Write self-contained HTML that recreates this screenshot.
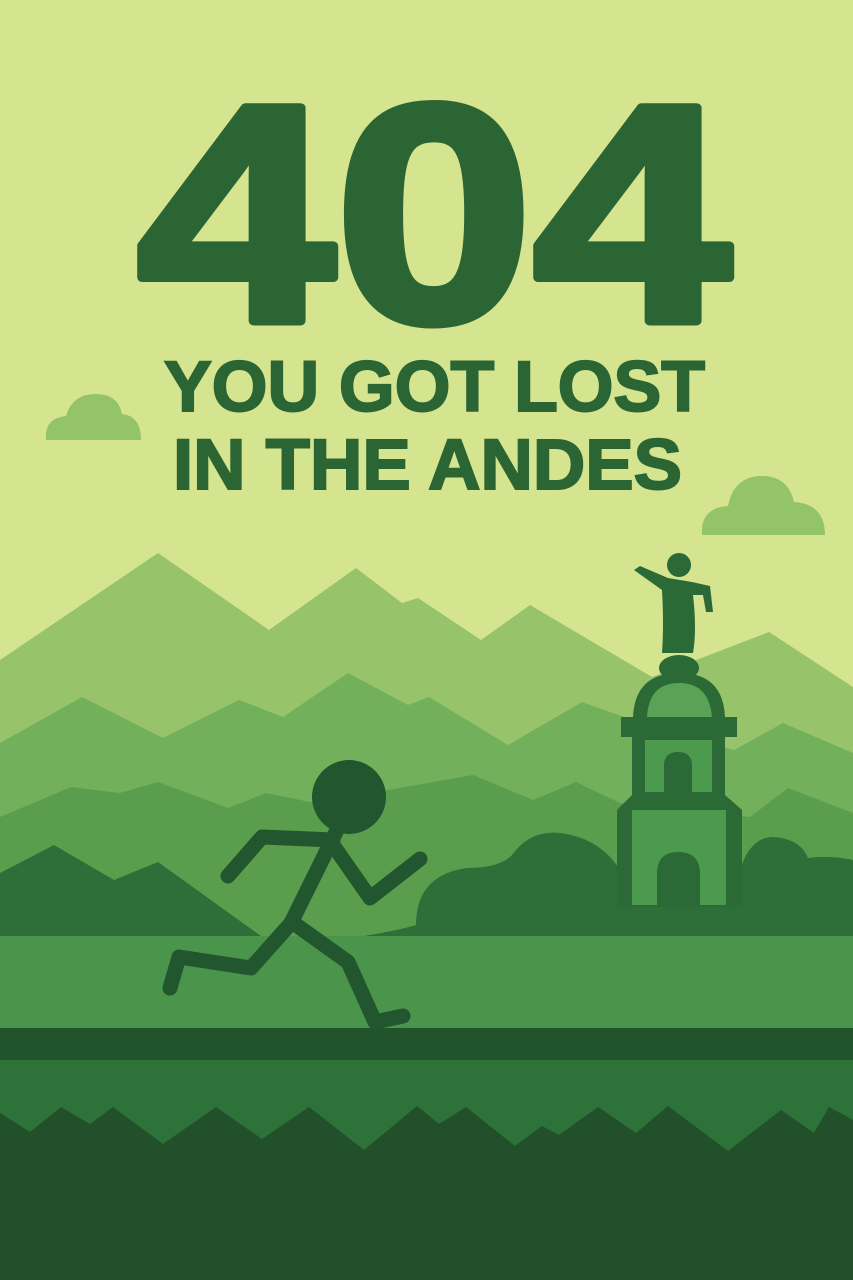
<!DOCTYPE html>
<html><head><meta charset="utf-8"><style>
html,body{margin:0;padding:0;width:853px;height:1280px;overflow:hidden;background:#d4e48f}
svg{display:block}
text{font-family:"Liberation Sans",sans-serif;font-weight:bold}
</style></head><body>
<svg width="853" height="1280" viewBox="0 0 853 1280" xmlns="http://www.w3.org/2000/svg">
<rect width="853" height="1280" fill="#d4e48f"/>
<path d="M46 440 Q44 418 66 416 Q72 394 96 394 Q118 394 122 414 Q141 416 141 440 Z" fill="#94c46a"/>
<path d="M702 535 Q700 508 728 506 Q734 476 762 476 Q788 476 794 502 Q825 504 825 535 Z" fill="#94c46a"/>
<text x="137" y="321" textLength="594" lengthAdjust="spacingAndGlyphs" font-size="310" fill="#2b6534" stroke="#2b6534" stroke-width="9" stroke-linejoin="round">404</text>
<text x="164" y="411" textLength="541" lengthAdjust="spacingAndGlyphs" font-size="71" fill="#2b6534" stroke="#2b6534" stroke-width="2">YOU GOT LOST</text>
<text x="173" y="489" textLength="509" lengthAdjust="spacingAndGlyphs" font-size="71" fill="#2b6534" stroke="#2b6534" stroke-width="2">IN THE ANDES</text>
<path d="M0 660 L158 553 L269 630 L356 568 L402 603 L418 598 L481 640 L530 605 L652 677 L769 632 L853 687 L853 960 L0 960 Z" fill="#97c46b"/>
<path d="M0 743 L82 697 L163 738 L239 700 L283 717 L348 673 L408 705 L429 697 L508 745 L582 702 L652 727 L734 750 L783 723 L853 753 L853 960 L0 960 Z" fill="#72b05b"/>
<path d="M0 817 L71 787 L120 793 L158 782 L228 808 L266 793 L315 803 L473 775 L533 800 L576 782 L620 803 L750 817 L788 788 L853 813 L853 960 L0 960 Z" fill="#5a9e4d"/>
<path d="M0 873 L54 845 L114 880 L158 862 L261 936 L0 936 Z" fill="#2e6e39"/>
<path d="M364 936 Q400 930 416 925 Q416 875 467 868 Q500 868 512 855 Q530 830 560 833 Q600 838 620 870 L740 870 Q750 838 772 837 Q800 838 808 858 Q830 855 853 860 L853 936 Z" fill="#2e6e39"/>
<rect x="0" y="936" width="853" height="92" fill="#4a944b"/>
<rect x="0" y="1028" width="853" height="32" fill="#22542c"/>
<rect x="0" y="1060" width="853" height="100" fill="#2c7239"/>
<path d="M0 1113 L30 1132 L61 1107 L90 1124 L113 1107 L163 1144 L216 1107 L262 1139 L309 1107 L364 1150 L417 1106 L439 1124 L466 1107 L515 1146 L542 1126 L559 1135 L598 1107 L636 1133 L668 1106 L728 1151 L781 1110 L814 1133 L829 1107 L853 1120 L853 1280 L0 1280 Z" fill="#22502b"/>
<g fill="#2b6a37">
<circle cx="679" cy="565" r="12"/>
<path d="M634 570 L640 566 L668 578 L692 582 L710 586 L713 612 L706 612 L703 595 L693 595 Q697 630 693 653 L662 653 Q664 625 662 590 Z"/>
<ellipse cx="679" cy="668" rx="20" ry="13"/>
<path d="M633 717 Q635 673 679 673 Q723 673 725 717 Z"/>
<rect x="621" y="717" width="116" height="20"/>
<path d="M632 737 L725 737 L725 795 L742 810 L742 907 L617 907 L617 810 L632 795 Z"/>
</g>
<path d="M647 717 Q649 683 679 683 Q709 683 712 717 Z" fill="#5aa356"/>
<g fill="#4c9a4e">
<rect x="645" y="740" width="67" height="52"/>
<rect x="632" y="810" width="94" height="95"/>
</g>
<g fill="#2b6a37">
<path d="M664 792 L664 766 Q664 752 678 752 Q692 752 692 766 L692 792 Z"/>
<path d="M657 905 L657 874 Q657 852 678 852 Q700 852 700 874 L700 905 Z"/>
</g>
<g stroke="#22562e" stroke-width="15" stroke-linecap="round" stroke-linejoin="round" fill="none">
<path d="M337 830 L290 925"/>
<path d="M333 840 L262 837 L228 876"/>
<path d="M333 845 L370 898 L420 859"/>
<path d="M292 922 L251 968 L179 957 L170 988"/>
<path d="M292 922 L348 962 L375 1022 L403 1016"/>
</g>
<circle cx="349" cy="797" r="37" fill="#22562e"/>
</svg>
</body></html>
